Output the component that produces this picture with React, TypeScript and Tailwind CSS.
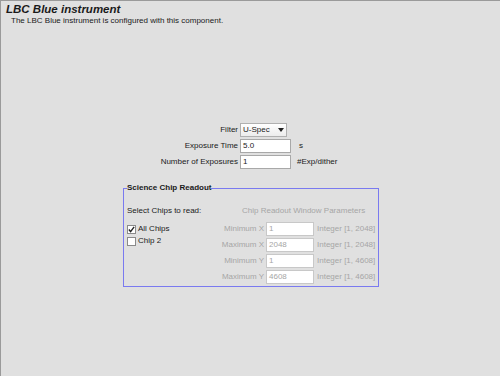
import React from "react";

const rows = [
  { label: "Minimum X", value: "1", range: "Integer [1, 2048]" },
  { label: "Maximum X", value: "2048", range: "Integer [1, 2048]" },
  { label: "Minimum Y", value: "1", range: "Integer [1, 4608]" },
  { label: "Maximum Y", value: "4608", range: "Integer [1, 4608]" },
];

const Check = ({ checked }: { checked: boolean }) => (
  <span className="w-[9px] h-[9px] border border-[#8a8a8a] bg-white flex items-center justify-center">
    {checked && (
      <svg width="7" height="7" viewBox="0 0 8 8">
        <path d="M1 4 L3 6.5 L7 1" fill="none" stroke="#222" strokeWidth="1.6" />
      </svg>
    )}
  </span>
);

const App = () => {
  return (
    <div
      className="w-[500px] h-[376px] bg-[#e0e0e0] border-t border-l border-[#9a9a9a] text-[8px] text-[#1a1a1a] overflow-hidden"
      style={{ fontFamily: '"Liberation Sans", Arial, sans-serif' }}
    >
      <div className="pl-[5px] pt-[1px]">
        <h1 className="text-[11.5px] leading-[14px] font-bold italic">LBC Blue instrument</h1>
        <p className="pl-[5px] leading-[10px]">The LBC Blue instrument is configured with this component.</p>
      </div>

      {/* main settings */}
      <div className="mt-[97px] ml-[150px] grid grid-cols-[87px_auto] gap-x-[2px] gap-y-[2px] items-center">
        <span className="text-right">Filter</span>
        <div className="flex">
          <div className="w-[47px] h-[14px] border border-[#b0b0b0] bg-gradient-to-b from-white to-[#ececec] flex items-center justify-between px-[2px]">
            <span>U-Spec</span>
            <svg width="6" height="4" viewBox="0 0 6 4">
              <path d="M0 0 H6 L3 4 Z" fill="#222" />
            </svg>
          </div>
        </div>
        <span className="text-right">Exposure Time</span>
        <div className="flex items-center gap-[8px]">
          <div className="w-[51px] h-[14px] border border-[#a8a8a8] bg-white px-[2px] leading-[12px]">5.0</div>
          <span>s</span>
        </div>
        <span className="text-right">Number of Exposures</span>
        <div className="flex items-center gap-[6px]">
          <div className="w-[51px] h-[14px] border border-[#a8a8a8] bg-white px-[2px] leading-[12px]">1</div>
          <span>#Exp/dither</span>
        </div>
      </div>

      {/* chip readout panel */}
      <fieldset className="mt-[14px] ml-[122px] w-[232px] h-[104px] border border-[#7a7af0] px-[3px] pb-[4px]">
        <legend className="font-bold leading-[10px] px-0">Science Chip Readout</legend>
        <div className="flex mt-[12px]">
          <div className="w-[92px] flex flex-col">
            <span className="leading-[12px]">Select Chips to read:</span>
            <div className="mt-[6px] flex items-center gap-[2px] h-[12px]">
              <Check checked />
              <span>All Chips</span>
            </div>
            <div className="flex items-center gap-[2px] h-[12px]">
              <Check checked={false} />
              <span>Chip 2</span>
            </div>
          </div>
          <div className="flex flex-col text-[#a6a6a6]">
            <span className="leading-[12px] ml-[23px] whitespace-nowrap">Chip Readout Window Parameters</span>
            <div className="mt-[5px] grid grid-cols-[45px_48px_auto] gap-x-[2px] gap-y-[2px] items-center">
              {rows.map((r) => (
                <React.Fragment key={r.label}>
                  <span className="text-right whitespace-nowrap">{r.label}</span>
                  <div className="h-[14px] border border-[#c8c8c8] bg-white px-[2px] leading-[12px]">{r.value}</div>
                  <span className="ml-[1px] whitespace-nowrap">{r.range}</span>
                </React.Fragment>
              ))}
            </div>
          </div>
        </div>
      </fieldset>
    </div>
  );
};

export default App;
